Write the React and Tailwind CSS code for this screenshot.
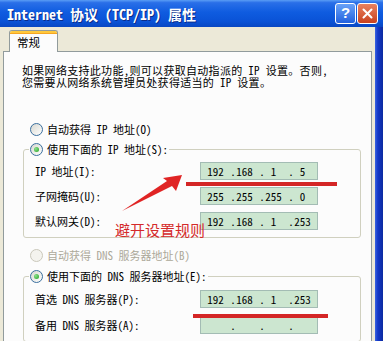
import React from "react";

const UI = "font-['Noto_Sans_CJK_SC',sans-serif] [font-feature-settings:'hwid'] text-[11px] text-black";

function Radio({ checked, disabled }) {
  return (
    <span
      className={
        disabled
          ? "flex h-[13px] w-[13px] shrink-0 items-center justify-center rounded-full border border-[#cac8bb] bg-[#f4f3ee]"
          : "flex h-[13px] w-[13px] shrink-0 items-center justify-center rounded-full border border-[#3a6f9e] bg-linear-to-br from-[#d8d8d0] to-[#ffffff]"
      }
    >
      {checked && <span className="h-[5px] w-[5px] rounded-full bg-[radial-gradient(circle_at_35%_35%,#8be08b,#21a121)]" />}
    </span>
  );
}

function IpField({ parts }) {
  return (
    <div className="flex h-[18px] w-[118px] items-center border border-[#a3bcb4] bg-[#cce6d0] text-[11px] leading-none text-black">
      {parts.map((p, i) => (
        <div key={i} className="flex w-[29px] items-center">
          <span className="w-[6px] text-center">{i > 0 ? "." : ""}</span>
          <span className="flex-1 pr-[6px] text-center">{p}</span>
        </div>
      ))}
    </div>
  );
}

function Row({ label, parts }) {
  return (
    <div className="ml-[6px] flex h-[18px] items-center">
      <span className="w-[165px] whitespace-nowrap">{label}</span>
      <IpField parts={parts} />
    </div>
  );
}

export default function App() {
  return (
    <div className={`relative flex h-[341px] w-[383px] flex-col overflow-hidden bg-[#ece9d8] ${UI}`}>
      {/* Title bar */}
      <div className="flex h-[27px] shrink-0 items-center justify-between bg-[linear-gradient(180deg,#5a9df5_0%,#2a6fe8_10%,#0f5ce0_45%,#0a52d6_80%,#0847c2_100%)] pl-[7px] pr-[5px]">
        <span className="whitespace-nowrap text-[14px] font-bold leading-none text-white [text-shadow:1px_1px_0_#0a2c8a]">
          Internet 协议 (TCP/IP) 属性
        </span>
        <div className="flex items-center">
          <div className="flex h-[21px] w-[21px] items-center justify-center rounded-[3px] border border-white bg-linear-to-b from-[#6aa2f7] to-[#2160de] font-['Liberation_Sans',sans-serif] text-[15px] font-bold text-white">
            ?
          </div>
          <div className="ml-[1px] flex h-[21px] w-[21px] items-center justify-center rounded-[3px] border border-white bg-linear-to-b from-[#e9825f] to-[#c8401c]">
            <svg width="11" height="11" viewBox="0 0 11 11">
              <path d="M1.5 1.5 L9.5 9.5 M9.5 1.5 L1.5 9.5" stroke="#ffffff" strokeWidth="2" strokeLinecap="round" />
            </svg>
          </div>
        </div>
      </div>

      {/* Body */}
      <div className="flex min-h-0 flex-1">
        <div className="flex min-w-0 flex-1 flex-col pl-[3px] pr-[3px] pt-[3px]">
          {/* Tab */}
          <div className="relative z-10 -mb-px ml-[6px] flex h-[22px] w-[49px] flex-col overflow-hidden rounded-t-[3px] border border-b-0 border-[#919b9c] bg-[#fcfcfc]">
            <div className="h-[2px] w-full bg-[#ffc83c]" />
            <div className="h-px w-full bg-[#f6a623]" />
            <span className="pl-[7px] pt-[1px] text-[11.5px] leading-[14px]">常规</span>
          </div>
          {/* Panel */}
          <div className="min-h-0 flex-1 overflow-hidden border border-b-0 border-[#919b9c] bg-[#fcfcfc] pl-[18px]">
            <p className="whitespace-nowrap pt-[12px] leading-[12px] tracking-[0.3px]">
              如果网络支持此功能，则可以获取自动指派的 IP 设置。否则，
              <br />
              您需要从网络系统管理员处获得适当的 IP 设置。
            </p>

            <div className="ml-[8px] mt-[33px] flex h-[16px] items-center gap-[4px] whitespace-nowrap">
              <Radio />
              <span>自动获得 IP 地址(O)</span>
            </div>

            <fieldset className="ml-[1px] mt-[4px] w-[338px] rounded-[3px] border border-[#d0d0bf] pb-[7px] pl-[5px]">
              <legend className="px-[1px]">
                <span className="flex h-[16px] items-center gap-[4px] whitespace-nowrap">
                  <Radio checked />
                  <span>使用下面的 IP 地址(S):</span>
                </span>
              </legend>
              <div className="flex flex-col gap-[7px] pt-[5px]">
                <Row label="IP 地址(I):" parts={["192", "168", "1", "5"]} />
                <Row label="子网掩码(U):" parts={["255", "255", "255", "0"]} />
                <Row label="默认网关(D):" parts={["192", "168", "1", "253"]} />
              </div>
            </fieldset>

            <div className="ml-[8px] mt-[9px] flex h-[16px] items-center gap-[4px] whitespace-nowrap text-[#aca899]">
              <Radio disabled />
              <span>自动获得 DNS 服务器地址(B)</span>
            </div>

            <fieldset className="ml-[1px] mt-[5px] w-[338px] rounded-[3px] border border-[#d0d0bf] pb-[7px] pl-[5px]">
              <legend className="px-[1px]">
                <span className="flex h-[16px] items-center gap-[4px] whitespace-nowrap">
                  <Radio checked />
                  <span>使用下面的 DNS 服务器地址(E):</span>
                </span>
              </legend>
              <div className="flex flex-col gap-[8px] pt-[6px]">
                <Row label="首选 DNS 服务器(P):" parts={["192", "168", "1", "253"]} />
                <Row label="备用 DNS 服务器(A):" parts={["", "", "", ""]} />
              </div>
            </fieldset>
          </div>
        </div>
        {/* Right window frame */}
        <div className="w-[8px] shrink-0 bg-[linear-gradient(90deg,#3a64e0_0%,#1438c8_35%,#0b2aa0_100%)]" />
      </div>

      {/* Red annotations drawn over the screenshot */}
      <div className="absolute left-[186px] top-[182px] h-[3.5px] w-[151px] bg-[#d42626]" />
      <div className="absolute left-[193px] top-[314px] h-[3.5px] w-[135px] bg-[#d42626]" />
      <svg className="absolute left-0 top-0" width="383" height="341" viewBox="0 0 383 341">
        <polygon points="122,211 167,181 163,178 182,175 176,191 172,186" fill="#e02424" />
      </svg>
      <span className="absolute left-[115px] top-[222px] whitespace-nowrap font-['Noto_Sans_CJK_SC',sans-serif] text-[15px] leading-[15px] text-[#d42a2a] [font-feature-settings:normal]">
        避开设置规则
      </span>
    </div>
  );
}
